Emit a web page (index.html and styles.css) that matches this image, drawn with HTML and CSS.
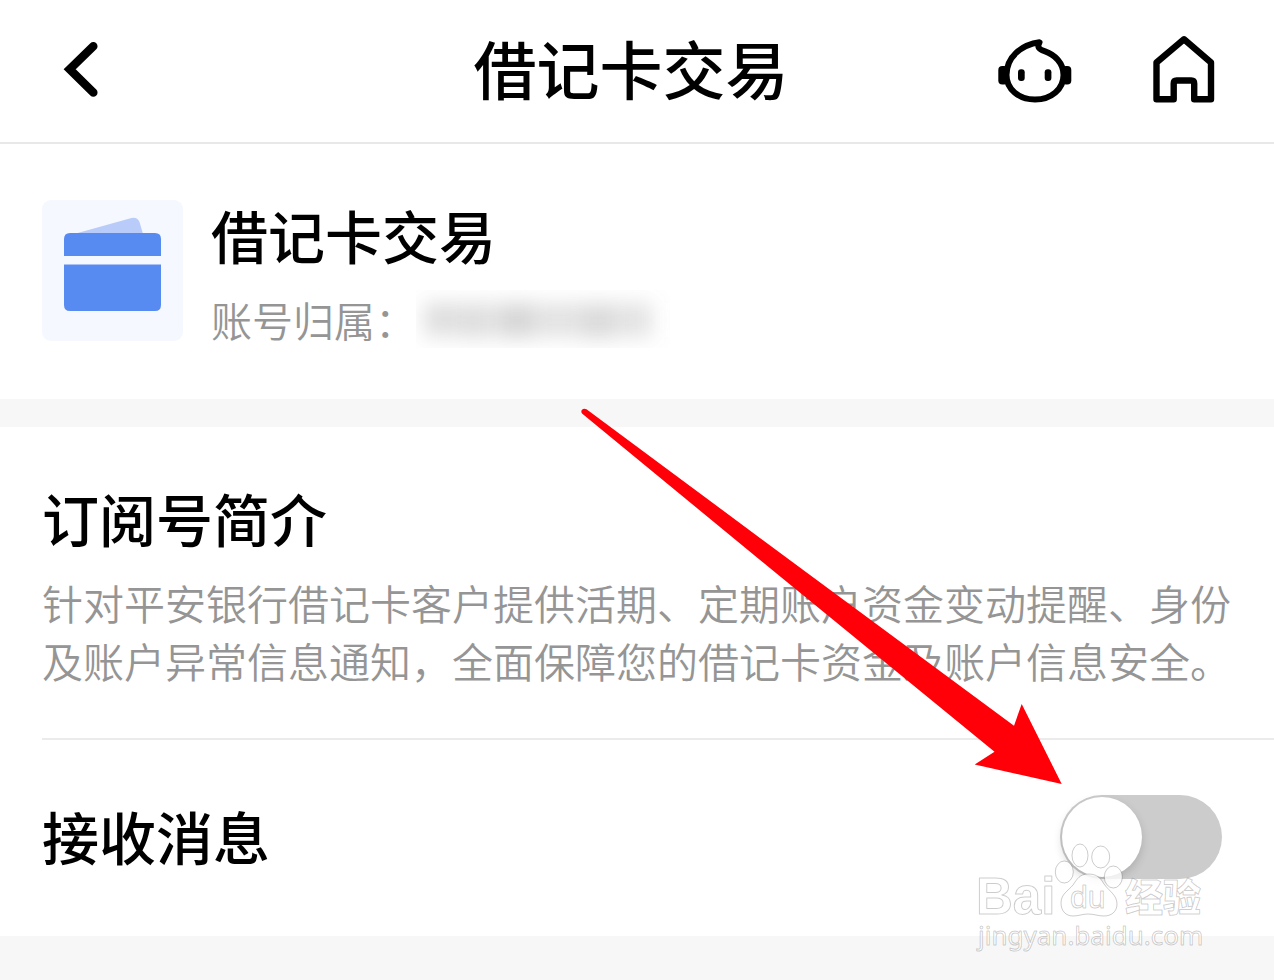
FILE: index.html
```html
<!DOCTYPE html>
<html lang="zh-CN">
<head>
<meta charset="utf-8">
<meta name="viewport" content="width=device-width, initial-scale=1">
<title>借记卡交易</title>
<link rel="stylesheet" href="styles.css">
</head>
<body>
<div class="page">
  <header class="topbar">
    <div class="topbar-left">
      <button class="icon-button" type="button" aria-label="返回">
        <svg width="64" height="76" viewBox="48 32 64 76" fill="none" stroke="#000" stroke-width="8.5" stroke-linecap="round" stroke-linejoin="miter"><path d="M93.3 46.2 69.7 69.3l23.6 23.2"/></svg>
      </button>
    </div>
    <h1 class="topbar-title">借记卡交易</h1>
    <div class="topbar-right">
      <button class="icon-button" type="button" aria-label="客服">
        <svg width="76" height="76" viewBox="997 32 76 76">
          <path fill="none" stroke="#000" stroke-width="6" stroke-linejoin="round" d="M1039.5 42.3C1021 45 1006.500 57 1006.500 75c0 14 12 24.500 28.500 24.500s28.500-10.500 28.500-24.500c0-12-9-20.500-19-23.800-6-2-7.500-4-5-8.900Z"/>
          <rect x="998.300" y="66" width="9.700" height="18.500" rx="4"/>
          <rect x="1062" y="66" width="9.300" height="18.500" rx="4"/>
          <rect x="1018" y="69.300" width="6.700" height="11.700" rx="3"/>
          <rect x="1044.700" y="69.300" width="6.700" height="11.700" rx="3"/>
        </svg>
      </button>
      <button class="icon-button" type="button" aria-label="首页">
        <svg width="68" height="76" viewBox="1150 32 68 76" fill="none" stroke="#000" stroke-width="6.400" stroke-linejoin="round"><path d="M1184 39.300 1156.500 62.500V99.200H1173.700V83.500q0-3 3-3h14.500q3 0 3 3V99.200H1211V62.500Z"/></svg>
      </button>
    </div>
  </header>

  <main class="content">
    <section class="panel account">
      <svg class="account-icon" width="141" height="141" viewBox="42 200 141 141" aria-hidden="true">
        <rect x="42" y="200" width="141" height="141" rx="9" fill="#f5f8fe"/>
        <path fill="#b9cbf8" d="M74 234 131.500 218.100q5.500-1.500 8 4L143 234Z"/>
        <path fill="#588bf2" d="M64 256v-17q0-6 6-6h85q6 0 6 6v17Z"/>
        <path fill="#588bf2" d="M64 264.500h97V305q0 6-6 6H70q-6 0-6-6Z"/>
      </svg>
      <div class="account-text">
        <h2 class="heading">借记卡交易</h2>
        <p class="account-owner">
          <span>账号归属：</span>
          <svg class="masked" width="254" height="58" viewBox="416 290 254 58" role="img" aria-label="已隐藏">
            <defs><filter id="soften" x="-20%" y="-80%" width="140%" height="260%"><feGaussianBlur stdDeviation="10"/></filter></defs>
            <g filter="url(#soften)" fill="#888">
              <rect x="424" y="303" width="228" height="34" fill-opacity=".23"/>
              <rect x="428" y="304" width="26" height="24" fill-opacity=".08"/>
              <rect x="464" y="306" width="20" height="34" fill-opacity=".08"/>
              <rect x="502" y="304" width="30" height="34" fill-opacity=".16"/>
              <rect x="584" y="306" width="28" height="34" fill-opacity=".12"/>
            </g>
          </svg>
        </p>
      </div>
    </section>

    <section class="panel intro">
      <h2 class="heading">订阅号简介</h2>
      <p class="intro-text">针对平安银行借记卡客户提供活期、定期账户资金变动提醒、身份及账户异常信息通知，全面保障您的借记卡资金及账户信息安全。</p>
    </section>

    <section class="panel setting">
      <label class="heading setting-label" for="receive">接收消息</label>
      <input class="switch" id="receive" type="checkbox" role="switch">
    </section>

    <svg class="pointer" width="486" height="380" viewBox="578 406 486 380" aria-hidden="true">
      <path fill="#ff0008" d="M586.500 409.300 810 575 1014 725.700 1021.700 704 1061.700 784 974.700 764.500 994.500 751.700 768 566.500 582.300 413.800Q580.500 411.500 582 409.700 584 407.800 586.500 409.300Z"/>
    </svg>

    <svg class="watermark" width="236" height="120" viewBox="974 840 236 120">
      <text class="mark mark-latin" x="976" y="914">Bai</text>
      <g class="mark">
        <ellipse cx="1080" cy="855.500" rx="8" ry="11.500"/>
        <ellipse cx="1100.700" cy="857" rx="9" ry="11"/>
        <ellipse cx="1064.300" cy="872" rx="9" ry="11"/>
        <ellipse cx="1113.300" cy="877" rx="9" ry="11"/>
        <path d="M1088 874c8 0 12 3 16 10 5 7 13 11 13 20 0 8-6 12-13 12-6 0-10-2-16-2s-9 2-15 2c-7 0-12-5-12-13 0-9 7-12 12-18 4-6 7-11 15-11Z"/>
      </g>
      <text class="mark mark-du" x="1070" y="908">du</text>
      <text class="mark mark-han" x="1125" y="911">经验</text>
      <text class="mark mark-url" x="978" y="945">jingyan.baidu.com</text>
    </svg>
  </main>
</div>
</body>
</html>
```
FILE: styles.css
```css
* {
  box-sizing: border-box;
}

body {
  margin: 0;
  min-height: 100vh;
  background: #f7f7f7;
  color: #000;
  font-family: "Noto Sans CJK SC", "Liberation Sans", sans-serif;
}

h1,
h2,
p {
  margin: 0;
}

.topbar {
  display: grid;
  grid-template-columns: 1fr auto 1fr;
  align-items: center;
  height: 144px;
  padding: 0 56px 2px 44px;
  background: #fff;
  border-bottom: 2px solid #e8e8e8;
}

.topbar-title {
  padding-bottom: 6px;
  font-size: 63px;
  line-height: 88px;
  font-weight: 500;
}

.topbar-left,
.topbar-right {
  display: flex;
  align-items: center;
}

.topbar-left {
  padding-left: 4px;
}

.topbar-right {
  justify-content: flex-end;
  gap: 77px;
}

.icon-button {
  display: flex;
  padding: 0;
  border: 0;
  background: none;
  cursor: pointer;
}

.content {
  position: relative;
}

.panel {
  background: #fff;
}

.heading {
  font-size: 57px;
  line-height: 76px;
  font-weight: 500;
}

.account {
  display: flex;
  align-items: flex-start;
  gap: 28px;
  padding: 52px 42px 51px;
}

.account-icon {
  flex: none;
  margin-top: 4px;
}

.account-text {
  display: flex;
  flex-direction: column;
  gap: 18px;
}

.account-owner {
  display: flex;
  align-items: center;
  color: #959595;
  font-size: 41px;
  line-height: 58px;
  font-weight: 350;
}

.masked {
  overflow: hidden;
}

.intro {
  margin-top: 28px;
  padding: 52px 42px 49px;
}

.intro-text {
  margin-top: 18px;
  color: #959595;
  font-size: 41px;
  line-height: 58px;
  font-weight: 350;
}

.setting {
  position: relative;
  display: flex;
  align-items: center;
  justify-content: space-between;
  padding: 57px 52px 57px 42px;
}

.setting::before {
  content: "";
  position: absolute;
  top: 0;
  right: 0;
  left: 42px;
  height: 2px;
  background: #ebebeb;
}

.setting-label {
  padding-bottom: 4px;
}

.switch {
  appearance: none;
  flex: none;
  display: flex;
  align-items: center;
  width: 162px;
  height: 84px;
  margin: 0;
  padding: 2px;
  border-radius: 42px;
  background: #ccc;
  cursor: pointer;
}

.switch::before {
  content: "";
  width: 80px;
  height: 80px;
  border-radius: 50%;
  background: #fff;
  box-shadow: 0 4px 10px rgba(0, 0, 0, 0.15);
}

.switch:checked {
  justify-content: flex-end;
  background: #588bf2;
}

.pointer {
  position: absolute;
  top: 262px;
  right: 210px;
  pointer-events: none;
}

.watermark {
  position: absolute;
  top: 696px;
  right: 64px;
  pointer-events: none;
}

.mark {
  fill: #fff;
  fill-opacity: 0.8;
  stroke: #000;
  stroke-opacity: 0.2;
  stroke-width: 1px;
  stroke-linejoin: round;
}

.mark-latin {
  font: bold 51px "Liberation Sans", sans-serif;
}

.mark-du {
  font: 32px "Liberation Sans", sans-serif;
}

.mark-han {
  font: 900 38px "Noto Sans CJK SC", sans-serif;
}

.mark-url {
  font: 26px "Noto Sans", sans-serif;
}
```
